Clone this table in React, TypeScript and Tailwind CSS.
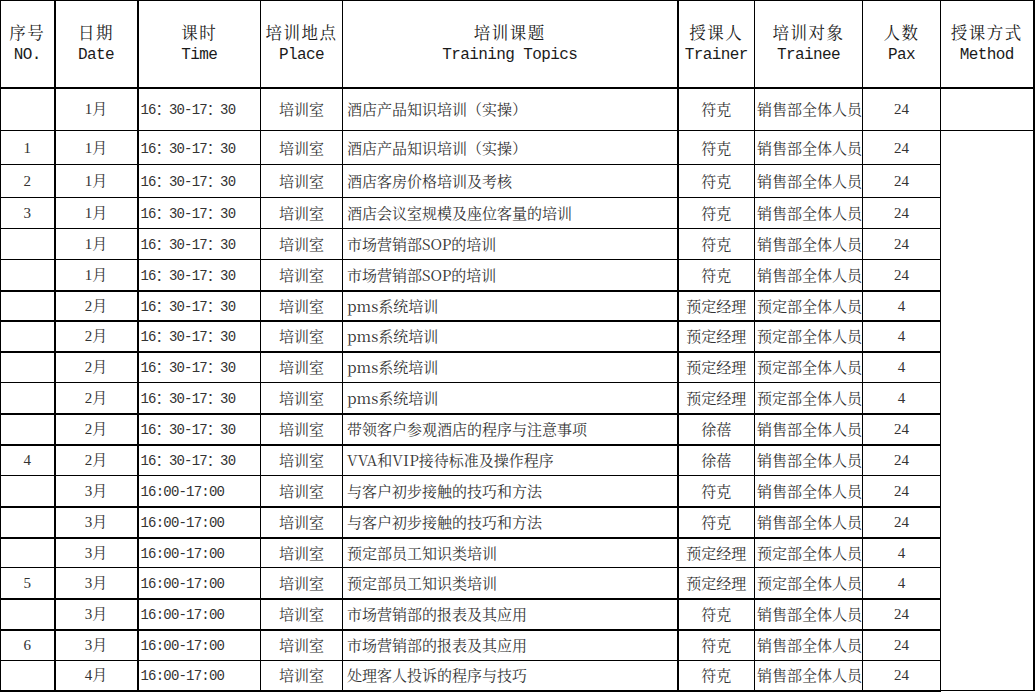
import React from "react";

// one training session per row
interface Session {
  no: string;
  month: string;
  time: string;
  topic: string;
  trainer: string;
  trainee: string;
  pax: string;
  h: string;
  thick?: boolean;
}

const cjk = "font-['Noto_Serif_CJK_SC','Noto_Sans_CJK_SC',serif]";
const serif = "font-['Liberation_Serif','Noto_Serif_CJK_SC','Noto_Sans_CJK_SC',serif]";
const mono = "font-['Liberation_Mono','Noto_Sans_CJK_SC',monospace]";

const EARLY = "16：30-17：30";
const LATE = "16:00-17:00";
const SALES = "销售部全体人员";
const BOOKING = "预定部全体人员";

const sessions: Session[] = [
  { no: "", month: "1月", time: EARLY, topic: "酒店产品知识培训（实操）", trainer: "符克", trainee: SALES, pax: "24", h: "h-[43px]" },
  { no: "1", month: "1月", time: EARLY, topic: "酒店产品知识培训（实操）", trainer: "符克", trainee: SALES, pax: "24", h: "h-[34px]" },
  { no: "2", month: "1月", time: EARLY, topic: "酒店客房价格培训及考核", trainer: "符克", trainee: SALES, pax: "24", h: "h-[33px]" },
  { no: "3", month: "1月", time: EARLY, topic: "酒店会议室规模及座位客量的培训", trainer: "符克", trainee: SALES, pax: "24", h: "h-[31px]" },
  { no: "", month: "1月", time: EARLY, topic: "市场营销部SOP的培训", trainer: "符克", trainee: SALES, pax: "24", h: "h-[31px]" },
  { no: "", month: "1月", time: EARLY, topic: "市场营销部SOP的培训", trainer: "符克", trainee: SALES, pax: "24", h: "h-[31px]", thick: true },
  { no: "", month: "2月", time: EARLY, topic: "pms系统培训", trainer: "预定经理", trainee: BOOKING, pax: "4", h: "h-[30px]", thick: true },
  { no: "", month: "2月", time: EARLY, topic: "pms系统培训", trainer: "预定经理", trainee: BOOKING, pax: "4", h: "h-[31px]", thick: true },
  { no: "", month: "2月", time: EARLY, topic: "pms系统培训", trainer: "预定经理", trainee: BOOKING, pax: "4", h: "h-[31px]" },
  { no: "", month: "2月", time: EARLY, topic: "pms系统培训", trainer: "预定经理", trainee: BOOKING, pax: "4", h: "h-[31px]", thick: true },
  { no: "", month: "2月", time: EARLY, topic: "带领客户参观酒店的程序与注意事项", trainer: "徐蓓", trainee: SALES, pax: "24", h: "h-[31px]", thick: true },
  { no: "4", month: "2月", time: EARLY, topic: "VVA和VIP接待标准及操作程序", trainer: "徐蓓", trainee: SALES, pax: "24", h: "h-[31px]" },
  { no: "", month: "3月", time: LATE, topic: "与客户初步接触的技巧和方法", trainer: "符克", trainee: SALES, pax: "24", h: "h-[31px]", thick: true },
  { no: "", month: "3月", time: LATE, topic: "与客户初步接触的技巧和方法", trainer: "符克", trainee: SALES, pax: "24", h: "h-[31px]", thick: true },
  { no: "", month: "3月", time: LATE, topic: "预定部员工知识类培训", trainer: "预定经理", trainee: BOOKING, pax: "4", h: "h-[30px]" },
  { no: "5", month: "3月", time: LATE, topic: "预定部员工知识类培训", trainer: "预定经理", trainee: BOOKING, pax: "4", h: "h-[31px]", thick: true },
  { no: "", month: "3月", time: LATE, topic: "市场营销部的报表及其应用", trainer: "符克", trainee: SALES, pax: "24", h: "h-[31px]", thick: true },
  { no: "6", month: "3月", time: LATE, topic: "市场营销部的报表及其应用", trainer: "符克", trainee: SALES, pax: "24", h: "h-[31px]" },
  { no: "", month: "4月", time: LATE, topic: "处理客人投诉的程序与技巧", trainer: "符克", trainee: SALES, pax: "24", h: "h-[30px]", thick: true },
];

const headers: [string, string][] = [
  ["序号", "NO."],
  ["日期", "Date"],
  ["课时", "Time"],
  ["培训地点", "Place"],
  ["培训课题", "Training Topics"],
  ["授课人", "Trainer"],
  ["培训对象", "Trainee"],
  ["人数", "Pax"],
  ["授课方式", "Method"],
];

// right-hand border weight per column, thick where the sheet has heavy rules
const edge = [
  "border-r-2",
  "border-r-2",
  "",
  "",
  "border-r-2",
  "",
  "",
  "",
  "border-r-2",
];

const cell = "border border-black align-middle p-0 overflow-hidden whitespace-nowrap leading-[20px]";

const App: React.FC = () => {
  return (
    <div className="w-[1035px] h-[693px] overflow-hidden bg-white">
      <table className="table-fixed border-collapse w-[1034px] border-l border-t border-black">
        <colgroup>
          <col className="w-[54px]" />
          <col className="w-[83px]" />
          <col className="w-[123px]" />
          <col className="w-[82px]" />
          <col className="w-[335px]" />
          <col className="w-[77px]" />
          <col className="w-[108px]" />
          <col className="w-[78px]" />
          <col className="w-[93px]" />
        </colgroup>
        <thead>
          <tr className="h-[87px]">
            {headers.map(([zh, en], i) => (
              <th
                key={en}
                className={`${cell} ${edge[i]} border-b-2 font-normal text-center text-[#1a1a1a]`}
              >
                <div className={`${cjk} text-[16.5px] leading-[23px] tracking-[1.5px]`}>
                  {zh}
                </div>
                <div className={`${mono} text-[16px] leading-[23px] tracking-[-0.6px]`}>
                  {en}
                </div>
              </th>
            ))}
          </tr>
        </thead>
        <tbody className="text-[#333]">
          {sessions.map((s, r) => (
            <tr key={r} className={s.h}>
              <td className={`${cell} ${edge[0]} ${s.thick ? "border-b-2" : ""} ${serif} text-[15px] text-center`}>
                {s.no}
              </td>
              <td className={`${cell} ${edge[1]} ${s.thick ? "border-b-2" : ""} ${serif} text-[15px] text-center`}>
                {s.month}
              </td>
              <td className={`${cell} ${edge[2]} ${s.thick ? "border-b-2" : ""} ${mono} text-[14px] tracking-[-0.8px] pl-[2px] pt-[2px]`}>
                {s.time}
              </td>
              <td className={`${cell} ${edge[3]} ${s.thick ? "border-b-2" : ""} ${cjk} text-[15px] text-center`}>
                培训室
              </td>
              <td className={`${cell} ${edge[4]} ${s.thick ? "border-b-2" : ""} ${cjk} text-[15px] pl-[4px]`}>
                {s.topic}
              </td>
              <td className={`${cell} ${edge[5]} ${s.thick ? "border-b-2" : ""} ${cjk} text-[15px] text-center`}>
                {s.trainer}
              </td>
              <td className={`${cell} ${edge[6]} ${s.thick ? "border-b-2" : ""} ${cjk} text-[15px] pl-[2px]`}>
                {s.trainee}
              </td>
              <td className={`${cell} ${edge[7]} ${s.thick ? "border-b-2" : ""} ${serif} text-[15px] text-center`}>
                {s.pax}
              </td>
              {r === 0 && <td className={`${cell} ${edge[8]}`} />}
              {r === 1 && (
                <td rowSpan={sessions.length - 1} className={`${cell} ${edge[8]}`} />
              )}
            </tr>
          ))}
        </tbody>
      </table>
    </div>
  );
};

export default App;
